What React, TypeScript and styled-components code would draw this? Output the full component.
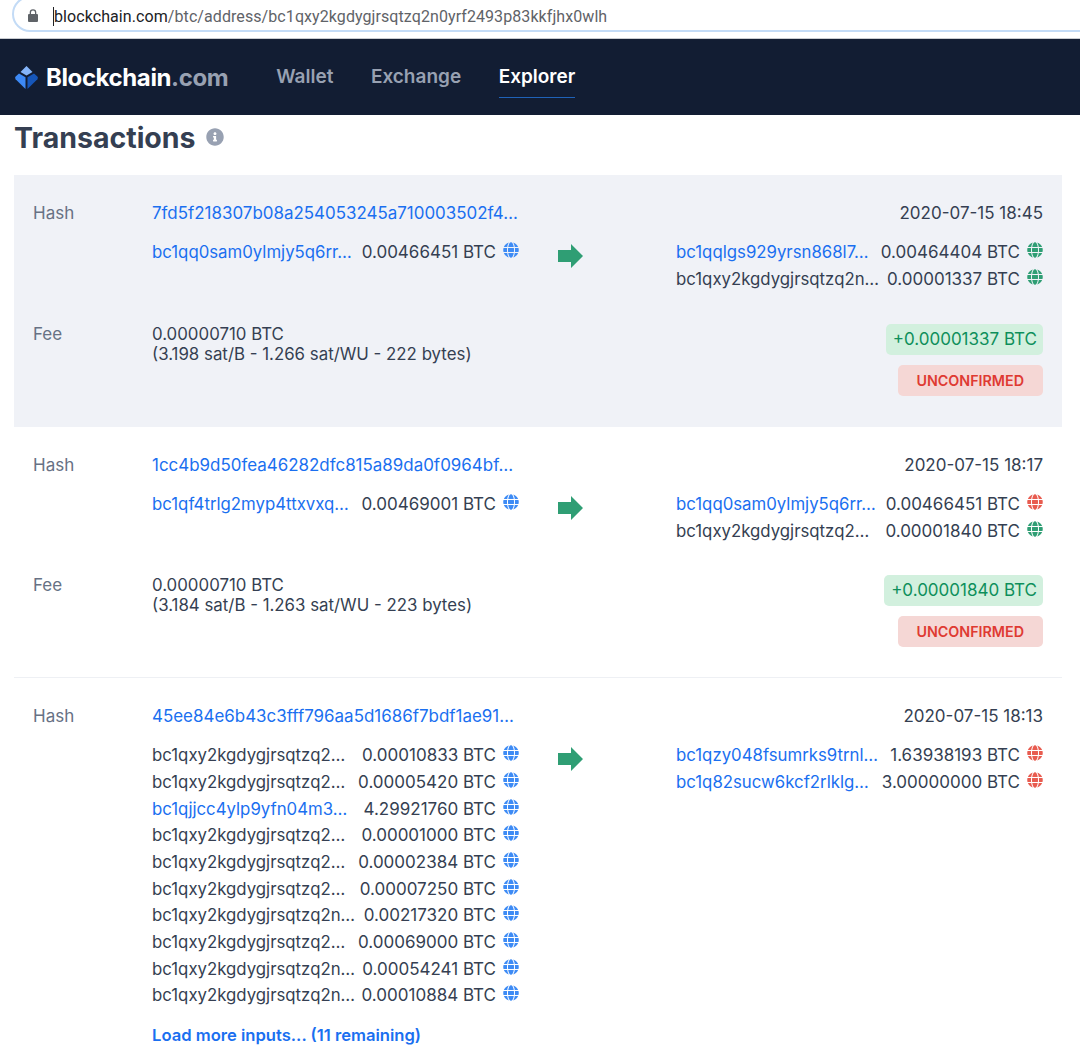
import React from "react";
import styled, { createGlobalStyle } from "styled-components";
import { FaGlobe, FaInfoCircle } from "react-icons/fa";

const Global = createGlobalStyle`
  html, body { margin: 0; padding: 0; background: #fff; height: 1057px; overflow: hidden; }
  body { font-family: Inter, "Liberation Sans", sans-serif; -webkit-font-smoothing: antialiased; }
`;

const BrowserBar = styled.div`
  height: 39px;
  padding: 0 0 6px 12px;
  box-sizing: border-box;
  background: #fff;
  border-bottom: 1px solid #c9ccd1;
  overflow: hidden;
`;
const UrlPill = styled.div`
  height: 36px;
  margin-top: -4px;
  margin-right: -30px;
  box-sizing: border-box;
  border: 2px solid #c3dbf6;
  border-radius: 18px;
  display: flex;
  align-items: center;
  padding: 4px 0 0 13px;
  font-family: Roboto, "Liberation Sans", sans-serif;
  font-size: 16px;
  letter-spacing: 0.08px;
  color: #5f6368;
  white-space: nowrap;
`;
const Host = styled.span`
  color: #202124;
  border-left: 1px solid #202124;
  margin-left: 14px;
`;

const Nav = styled.header`
  height: 76px;
  background: #121d33;
  display: flex;
  align-items: center;
  padding-left: 14px;
`;
const Brand = styled.div`
  display: flex;
  align-items: center;
  gap: 7px;
  font-size: 24px;
  font-weight: 700;
  letter-spacing: -0.4px;
  color: #fff;
  margin-right: 48px;
`;
const BrandTld = styled.span`
  color: #98a1b2;
`;
const NavLinks = styled.nav`
  display: flex;
  gap: 37.5px;
`;
const NavLink = styled.a<{ $active?: boolean }>`
  position: relative;
  font-size: 19px;
  line-height: 22px;
  font-weight: 600;
  color: ${(p) => (p.$active ? "#fff" : "#98a1b2")};
  &::after {
    content: "";
    display: ${(p) => (p.$active ? "block" : "none")};
    position: absolute;
    left: 0;
    right: 0;
    bottom: -10px;
    height: 1px;
    background: #1f62b8;
  }
`;

const TitleRow = styled.div`
  height: 60px;
  padding: 6px 0 0 14px;
  box-sizing: border-box;
  display: flex;
  align-items: flex-start;
  gap: 10px;
`;
const Title = styled.h1`
  margin: 0;
  font-size: 28.5px;
  line-height: 34px;
  font-weight: 700;
  color: #353f52;
`;
const InfoIcon = styled(FaInfoCircle)`
  width: 18px;
  height: 18px;
  color: #98a1b2;
  margin-top: 7px;
`;

const List = styled.main`
  padding: 0 18px 0 14px;
`;
const Tx = styled.section<{ $shaded?: boolean; $divided?: boolean }>`
  --fee-gap: ${(p) => (p.$shaded ? "31.67px" : "30.67px")};
  display: grid;
  grid-template-columns: 119px 367px 157px 367px;
  padding: 28px 19px ${(p) => (p.$shaded ? "31px" : p.$divided ? "30px" : "0")};
  background: ${(p) => (p.$shaded ? "#f0f2f7" : "transparent")};
  border-bottom: ${(p) => (p.$divided ? "1px solid #eef0f4" : "none")};
  box-sizing: border-box;
  font-size: 17px;
  line-height: 20px;
  color: #353f52;
`;
const Label = styled.div`
  color: #677184;
`;
const HashLink = styled.a`
  color: #1a6ff0;
  font-size: 16.95px;
  white-space: nowrap;
`;
const DateText = styled.div`
  grid-column: 4;
  text-align: right;
`;
const IoColumn = styled.div`
  margin-top: 16px;
  min-width: 0;
  grid-column: 2;
`;
const OutColumn = styled(IoColumn)`
  grid-column: 4;
`;
const IoRow = styled.div`
  display: flex;
  align-items: center;
  justify-content: space-between;
  height: 26.67px;
`;
const Address = styled.a<{ $link?: boolean }>`
  white-space: nowrap;
  font-size: 16.8px;
  color: ${(p) => (p.$link ? "#1a6ff0" : "#353f52")};
`;
const AmountGroup = styled.span`
  display: flex;
  align-items: center;
  white-space: nowrap;
`;
const Globe = styled(FaGlobe)<{ $tone: string }>`
  flex: none;
  width: 16px;
  height: 16px;
  margin-left: 7px;
  margin-top: -4px;
  color: ${(p) => p.$tone};
`;
const ArrowCell = styled.div`
  grid-column: 3;
  padding: 21px 0 0 39px;
`;
const FeeLabel = styled(Label)`
  grid-column: 1;
  margin-top: var(--fee-gap);
`;
const FeeText = styled.div`
  grid-column: 2;
  font-size: 16.85px;
  margin-top: var(--fee-gap);
`;
const Badges = styled.div`
  grid-column: 4;
  margin-top: var(--fee-gap);
  display: flex;
  flex-direction: column;
  align-items: flex-end;
  gap: 10px;
`;
const AmountBadge = styled.div`
  height: 31px;
  line-height: 31px;
  padding: 0 6px 0 7px;
  border-radius: 5px;
  background: #d2f0de;
  color: #0e8f5b;
`;
const StatusBadge = styled.div`
  height: 31px;
  line-height: 31px;
  padding: 0 19px 0 18px;
  border-radius: 5px;
  background: #f5d7d5;
  color: #df3a32;
  font-size: 14.3px;
  font-weight: 600;
`;
const LoadMore = styled.a`
  display: block;
  margin-top: 16px;
  color: #1a6ff0;
  font-size: 16.6px;
  font-weight: 600;
`;

const Arrow = () => (
  <svg width="25" height="24" viewBox="0 0 25 24" aria-hidden="true">
    <path d="M0 6h13V0l12 12-12 12v-6H0z" fill="#2f9e74" />
  </svg>
);

const Logo = () => (
  <svg width="25" height="25" viewBox="0 0 25 25" aria-hidden="true">
    <path d="M12.5 1 18.5 7 12.5 10.5 6.5 7z" fill="#85b5fa" />
    <path d="M5 8.5 11.5 12.3V24L1.6 14.2a2 2 0 0 1 0-2.6z" fill="#3d89f5" />
    <path d="M20 8.5 13.5 12.3V24l9.9-9.8a2 2 0 0 0 0-2.6z" fill="#1656b9" />
  </svg>
);

const OWN = "bc1qxy2kgdygjrsqtzq2n0yrf2493p83kkfjhx0wlh";
const OWN_LONG = "bc1qxy2kgdygjrsqtzq2n…";
const OWN_SHORT = "bc1qxy2kgdygjrsqtzq2…";
const BLUE = "#3d8bf5";
const GREEN = "#2f9e74";
const RED = "#e85c50";

type Io = { address: string; link?: boolean; amount: string; tone: string };

const IoLine = ({ address, link, amount, tone }: Io) => (
  <IoRow>
    <Address $link={link}>{address}</Address>
    <AmountGroup>
      {amount} BTC
      <Globe $tone={tone} />
    </AmountGroup>
  </IoRow>
);

type TxData = {
  hash: string;
  date: string;
  inputs: Io[];
  outputs: Io[];
  fee?: string;
  feeDetail?: string;
  delta?: string;
  more?: string;
  shaded?: boolean;
  divided?: boolean;
};

const txs: TxData[] = [
  {
    hash: "7fd5f218307b08a254053245a710003502f4…",
    date: "2020-07-15 18:45",
    inputs: [{ address: "bc1qq0sam0ylmjy5q6rr…", link: true, amount: "0.00466451", tone: BLUE }],
    outputs: [
      { address: "bc1qqlgs929yrsn868l7…", link: true, amount: "0.00464404", tone: GREEN },
      { address: OWN_LONG, amount: "0.00001337", tone: GREEN },
    ],
    fee: "0.00000710 BTC",
    feeDetail: "(3.198 sat/B - 1.266 sat/WU - 222 bytes)",
    delta: "+0.00001337 BTC",
    shaded: true,
  },
  {
    hash: "1cc4b9d50fea46282dfc815a89da0f0964bf…",
    date: "2020-07-15 18:17",
    inputs: [{ address: "bc1qf4trlg2myp4ttxvxq…", link: true, amount: "0.00469001", tone: BLUE }],
    outputs: [
      { address: "bc1qq0sam0ylmjy5q6rr…", link: true, amount: "0.00466451", tone: RED },
      { address: OWN_SHORT, amount: "0.00001840", tone: GREEN },
    ],
    fee: "0.00000710 BTC",
    feeDetail: "(3.184 sat/B - 1.263 sat/WU - 223 bytes)",
    delta: "+0.00001840 BTC",
    divided: true,
  },
  {
    hash: "45ee84e6b43c3fff796aa5d1686f7bdf1ae91…",
    date: "2020-07-15 18:13",
    inputs: [
      { address: OWN_SHORT, amount: "0.00010833", tone: BLUE },
      { address: OWN_SHORT, amount: "0.00005420", tone: BLUE },
      { address: "bc1qjjcc4ylp9yfn04m3…", link: true, amount: "4.29921760", tone: BLUE },
      { address: OWN_SHORT, amount: "0.00001000", tone: BLUE },
      { address: OWN_SHORT, amount: "0.00002384", tone: BLUE },
      { address: OWN_SHORT, amount: "0.00007250", tone: BLUE },
      { address: OWN_LONG, amount: "0.00217320", tone: BLUE },
      { address: OWN_SHORT, amount: "0.00069000", tone: BLUE },
      { address: OWN_LONG, amount: "0.00054241", tone: BLUE },
      { address: OWN_LONG, amount: "0.00010884", tone: BLUE },
    ],
    outputs: [
      { address: "bc1qzy048fsumrks9trnl…", link: true, amount: "1.63938193", tone: RED },
      { address: "bc1q82sucw6kcf2rlklg…", link: true, amount: "3.00000000", tone: RED },
    ],
    more: "Load more inputs... (11 remaining)",
  },
];

export default function App() {
  return (
    <>
      <Global />
      <BrowserBar>
        <UrlPill>
          <svg width="12" height="14" viewBox="0 0 12 14" fill="#5f6368" aria-hidden="true">
            <path d="M10 5h-.7V3.6a3.3 3.3 0 0 0-6.6 0V5H2a1 1 0 0 0-1 1v6a1 1 0 0 0 1 1h8a1 1 0 0 0 1-1V6a1 1 0 0 0-1-1zM4 3.6a2 2 0 0 1 4 0V5H4z" />
          </svg>
          <Host>blockchain.com</Host>/btc/address/{OWN}
        </UrlPill>
      </BrowserBar>
      <Nav>
        <Brand>
          <Logo />
          <span>
            Blockchain<BrandTld>.com</BrandTld>
          </span>
        </Brand>
        <NavLinks>
          <NavLink>Wallet</NavLink>
          <NavLink>Exchange</NavLink>
          <NavLink $active>Explorer</NavLink>
        </NavLinks>
      </Nav>
      <TitleRow>
        <Title>Transactions</Title>
        <InfoIcon />
      </TitleRow>
      <List>
        {txs.map((tx) => (
          <Tx key={tx.hash} $shaded={tx.shaded} $divided={tx.divided}>
            <Label>Hash</Label>
            <HashLink>{tx.hash}</HashLink>
            <DateText>{tx.date}</DateText>
            <IoColumn>
              {tx.inputs.map((io, i) => (
                <IoLine key={i} {...io} />
              ))}
              {tx.more && <LoadMore>{tx.more}</LoadMore>}
            </IoColumn>
            <ArrowCell>
              <Arrow />
            </ArrowCell>
            <OutColumn>
              {tx.outputs.map((io, i) => (
                <IoLine key={i} {...io} />
              ))}
            </OutColumn>
            {tx.fee && (
              <>
                <FeeLabel>Fee</FeeLabel>
                <FeeText>
                  {tx.fee}
                  <br />
                  {tx.feeDetail}
                </FeeText>
                <Badges>
                  <AmountBadge>{tx.delta}</AmountBadge>
                  <StatusBadge>UNCONFIRMED</StatusBadge>
                </Badges>
              </>
            )}
          </Tx>
        ))}
      </List>
    </>
  );
}
